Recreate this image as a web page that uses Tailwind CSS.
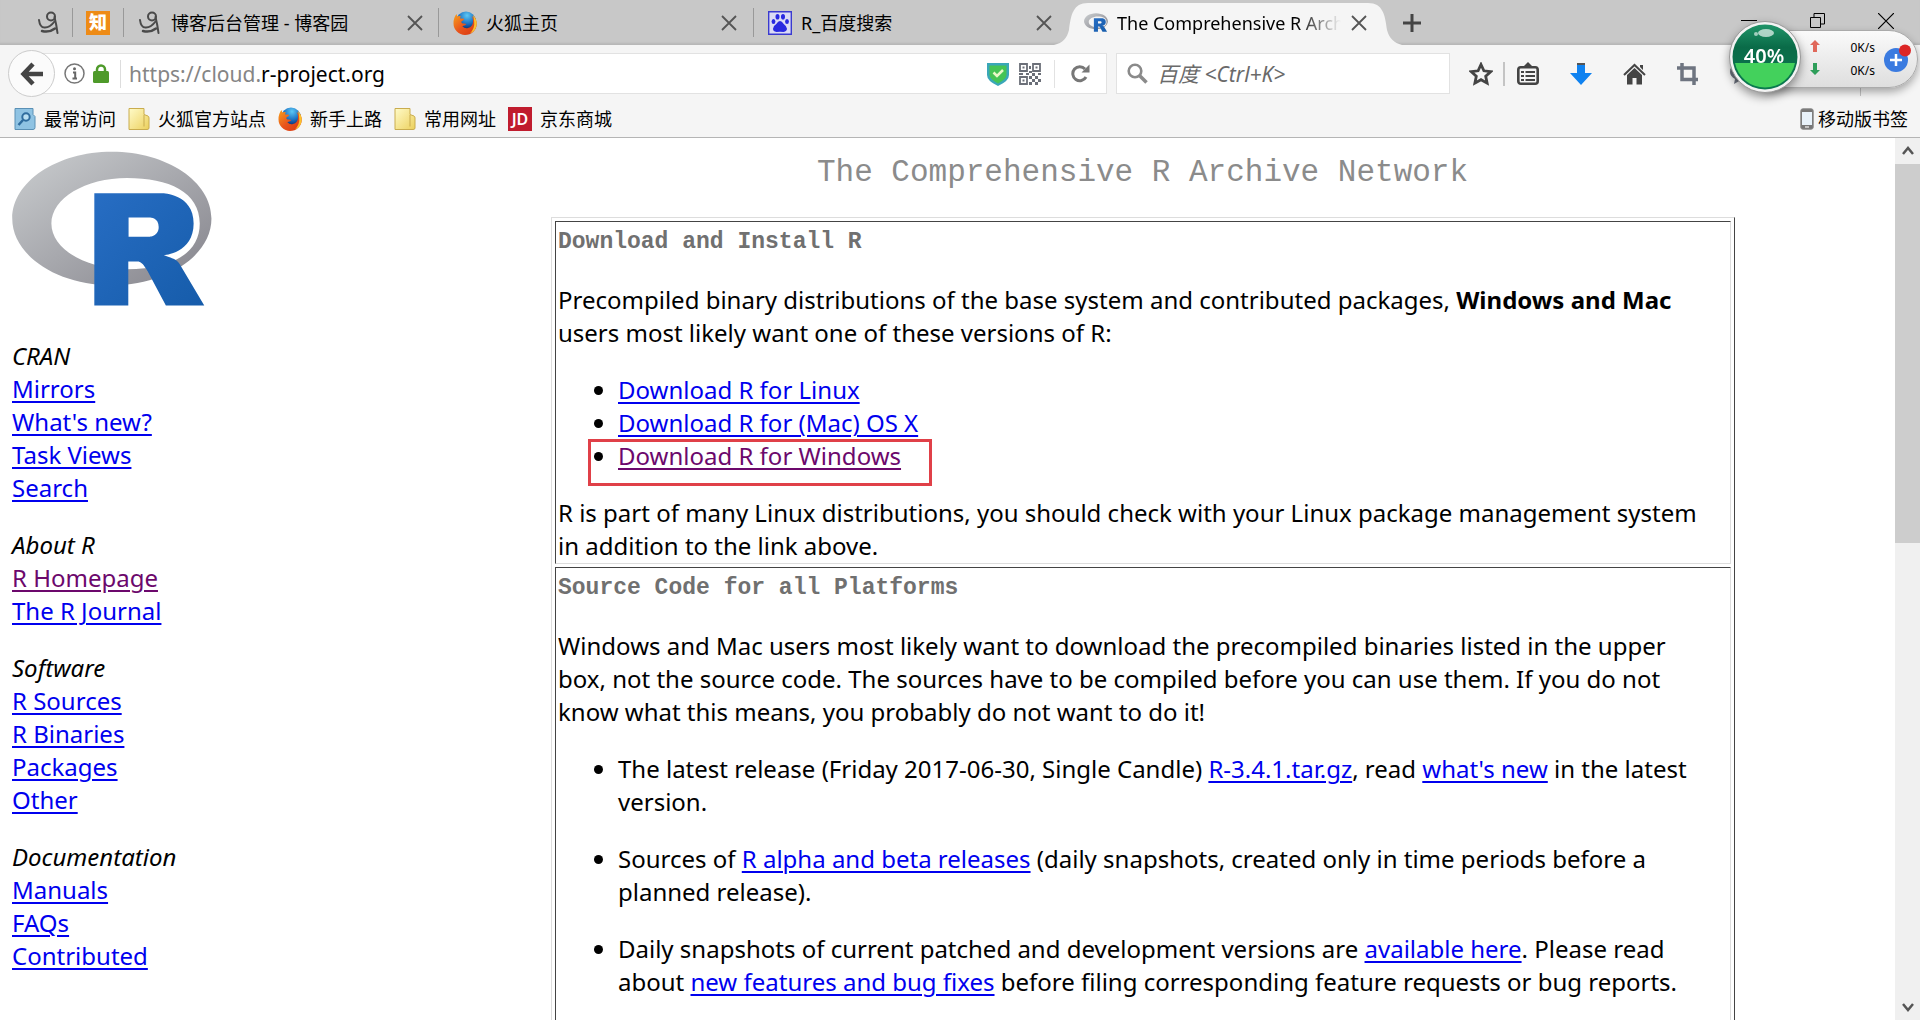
<!DOCTYPE html>
<html lang="zh-CN">
<head>
<meta charset="utf-8">
<title>The Comprehensive R Archive Network</title>
<script src="https://cdn.jsdelivr.net/npm/@tailwindcss/browser@4"></script>
</head>
<body class="h-screen overflow-hidden flex flex-col bg-white text-black font-['Noto_Sans','Noto_Sans_CJK_SC',sans-serif]">

<svg class="absolute size-0" aria-hidden="true">
  <defs>
    <linearGradient id="ring" x1="0" y1="0" x2="1" y2="1"><stop offset="0" stop-color="#cbced0"/><stop offset="1" stop-color="#84838b"/></linearGradient>
    <linearGradient id="letter" x1="0" y1="0" x2="1" y2="1"><stop offset="0" stop-color="#276dc3"/><stop offset="1" stop-color="#165caa"/></linearGradient>
    <radialGradient id="globe" cx=".55" cy=".2" r=".7"><stop offset="0" stop-color="#5cc8f5"/><stop offset=".6" stop-color="#1c6fc0"/><stop offset="1" stop-color="#0b2a6b"/></radialGradient>
    <linearGradient id="fox" x1="0" y1="0" x2="1" y2="1"><stop offset="0" stop-color="#f9a11b"/><stop offset=".5" stop-color="#e8541c"/><stop offset="1" stop-color="#d8350f"/></linearGradient>
    <linearGradient id="folderfill" x1="0" y1="0" x2="1" y2="1"><stop offset="0" stop-color="#fffbc9"/><stop offset="1" stop-color="#ecd05c"/></linearGradient>
    <linearGradient id="ball" x1="0" y1="0" x2="0" y2="1"><stop offset="0" stop-color="#1f9468"/><stop offset=".35" stop-color="#0a6b48"/><stop offset="1" stop-color="#0a7a50"/></linearGradient>
  </defs>
  <symbol id="rlogo" viewBox="0 0 724 561">
    <path fill="url(#ring)" fill-rule="evenodd" d="M361.5 486C162.300 486 .9 377.800 .9 244.500S162.300 3 361.500 3 722 111.100 722 244.500 560.600 486 361.500 486ZM416.600 97.400C265.300 97.400 142.600 171.300 142.600 262.500S265.300 427.600 416.600 427.600 679.700 377 679.700 262.500 568 97.400 416.600 97.400Z"/>
    <path fill="url(#letter)" fill-rule="evenodd" d="M550 377S571.800 383.600 584.500 390C588.900 392.200 596.500 396.700 602 402.500 607.400 408.200 610 414 610 414L696 559H557L492 437S478.700 414.100 470.500 407.500C463.700 402 460.800 400 454 400H421V559H298V153H545S657.500 155 657.500 262 550 377 550 377ZM496.500 241H422V310H496.500S531 309.900 531 274.900C531 239.200 496.500 241 496.500 241Z"/>
  </symbol>
  <symbol id="firefox" viewBox="0 0 24 24">
    <circle cx="13" cy="10.500" r="10" fill="url(#globe)"/>
    <path d="M20 4q3.800 4 3.700 9A11.800 11 0 0 1 12 24 11.600 11.600 0 0 1 .5 12.500Q.3 7 3.500 3l.8 2.500Q6 4.500 8 5.300 6.800 6.500 7.200 7.500q1.200-.3 3.800.3.700.9-1.500 2l-1.300 1q.3 1.500 1.500 1.700 2-.4 3.700.6-1 2-4.200 1.800 2.300 3 5.800 2.200 4.800-1.300 5-6Q20.500 7.500 18.500 5l2.800 2.500Z" fill="url(#fox)"/>
    <path d="M20 4q3.800 4 3.700 9A11.800 11 0 0 1 17 22.500Q22 17 21.200 11 21 7 20 4Z" fill="#fbc22c"/>
  </symbol>
  <symbol id="cnblogs" viewBox="0 0 22 24" >
    <g fill="none" stroke="#4a4a4a" stroke-width="2" stroke-linecap="round">
      <path d="M1 9q1 8 6 7.500 5 0 9.500-6"/><circle cx="13" cy="5.500" r="4"/><path d="M16.500 6q2 8 3 16"/><path d="M4 20q7 2 13-2.500" stroke-width="2.500"/>
    </g>
  </symbol>
  <symbol id="cross" viewBox="0 0 16 16"><path d="M1 1 15 15M15 1 1 15" stroke="#555" stroke-width="1.800"/></symbol>
  <symbol id="folder" viewBox="0 0 22 24"><path d="M1 1.500h15v6l4 1.500q1 .5 1 2v10q0 1.500-2 1.500H1Z" fill="url(#folderfill)" stroke="#c9ac4e"/><path d="M16 8v11.500" stroke="#c9ac4e"/></symbol>
</svg>

<header class="relative shrink-0 bg-[#f5f5f5] border-b border-[#b5b5b5]">
  <!-- tab strip -->
  <div class="h-[45px] flex items-stretch bg-[#c8c8c8] shadow-[inset_0_-3px_2px_-1px_#b8b8b8] text-lg leading-6" role="tablist">
    <button class="w-[72px] shrink-0 flex items-center justify-end pr-3" aria-label="博客园"><svg class="w-[22px] h-6"><use href="#cnblogs"/></svg></button>
    <span class="w-px my-2 bg-[#999]"></span>
    <button class="w-[50px] shrink-0 flex items-center justify-center" aria-label="知乎"><span class="size-6 bg-[#ee8b16] text-white font-black text-lg leading-[22px] text-center">知</span></button>
    <span class="w-px my-2 bg-[#999]"></span>
    <button class="w-[314px] shrink-0 flex items-center pl-[15px] pr-[15px]"><svg class="w-[22px] h-6 mr-[10px]"><use href="#cnblogs"/></svg><span class="flex-1 text-left">博客后台管理 - 博客园</span><svg class="size-4"><use href="#cross"/></svg></button>
    <span class="w-px my-2 bg-[#999]"></span>
    <button class="w-[314px] shrink-0 flex items-center pl-3.5 pr-4"><svg class="size-6 mr-[9px]"><use href="#firefox"/></svg><span class="flex-1 text-left">火狐主页</span><svg class="size-4"><use href="#cross"/></svg></button>
    <span class="w-px my-2 bg-[#999]"></span>
    <button class="w-[314px] shrink-0 flex items-center pl-3.5 pr-4">
      <svg class="size-6 mr-[9px]" viewBox="0 0 24 24"><path d="M.7.7h22.600v22.600H.7Z" fill="#dcdcf5" stroke="#3a3ad0" stroke-width="1.400"/><g fill="#2a2ae0"><ellipse cx="9.500" cy="5.800" rx="2" ry="2.800"/><ellipse cx="15" cy="5.800" rx="2" ry="2.800"/><ellipse cx="5.500" cy="10.500" rx="1.900" ry="2.600"/><ellipse cx="19" cy="10.500" rx="1.900" ry="2.600"/><path d="M12 10q2 0 3.500 2.800 3.500 2.700 3.500 5T15.500 21q-3.500-.7-7 0Q5 20.500 5 17.800t3.500-5Q10 10 12 10Z"/></g></svg>
      <span class="flex-1 text-left">R_百度搜索</span><svg class="size-4"><use href="#cross"/></svg></button>
    <button class="relative w-[322px] shrink-0 flex items-center pl-4 pr-[23px]" aria-selected="true">
      <svg class="absolute -left-[14px] top-0 w-[350px] h-[45px]" viewBox="0 0 350 45"><path d="M0 45C9 43 13 38 15 30 17 15 19 3 34 3H314C329 3 331 15 333 30 335 38 340 43 348 45Z" fill="#f5f5f5"/></svg>
      <svg class="relative w-6 h-[19px] mr-[9px]"><use href="#rlogo"/></svg>
      <span class="relative flex-1 min-w-0 overflow-hidden whitespace-nowrap text-left mask-r-from-80% mask-r-to-100%">The Comprehensive R Archive Network</span>
      <svg class="relative size-4 ml-2.5"><use href="#cross"/></svg></button>
    <button class="ml-2.5 w-6 shrink-0 flex items-center justify-center" aria-label="新标签页"><svg class="size-[18px]" viewBox="0 0 18 18"><path d="M9 0v18M0 9h18" stroke="#444" stroke-width="3"/></svg></button>
    <div class="ml-auto flex items-start gap-[53px] pt-[13px] pr-[26px]">
      <button aria-label="最小化"><svg class="size-4" viewBox="0 0 16 16"><path d="M0 7.500h16" stroke="#000"/></svg></button>
      <button aria-label="还原"><svg class="size-[15px]" viewBox="0 0 15 15"><path d="M.5 4.500h10v10H.5ZM4 4V.5h10.500V11H11" fill="none" stroke="#000"/></svg></button>
      <button aria-label="关闭"><svg class="size-4" viewBox="0 0 16 16"><path d="M0 0 16 16M16 0 0 16" stroke="#000" stroke-width="1.200"/></svg></button>
    </div>
  </div>

  <!-- navigation bar -->
  <div class="h-[57px] flex items-center pl-2 pr-[14px]">
    <button class="relative z-10 size-[47px] shrink-0 rounded-full bg-[#fbfbfb] border border-[#ccc] flex items-center justify-center" aria-label="后退"><svg class="size-6" viewBox="0 0 24 24"><path d="M23 12H4M13 2 3.500 12 13 22" fill="none" stroke="#444" stroke-width="4.500"/></svg></button>
    <div class="-ml-6 h-[41px] flex-1 flex items-center bg-white border border-[#e2e2e2] pl-8">
      <svg class="size-[21px]" viewBox="0 0 21 21"><circle cx="10.500" cy="10.500" r="9.500" fill="none" stroke="#777" stroke-width="1.500"/><path d="M9 9.500h2.200v6M8.500 15.500h4.500" fill="none" stroke="#666" stroke-width="2"/><circle cx="10.500" cy="5.800" r="1.500" fill="#666"/></svg>
      <svg class="ml-2 w-4 h-[19px]" viewBox="0 0 16 19"><path d="M4 9V5.500a4 4 0 0 1 8 0V9" fill="none" stroke="#4e9a2a" stroke-width="2.500"/><rect y="7" width="16" height="12" rx="1.500" fill="#4e9a2a"/></svg>
      <span class="ml-[11px] w-px h-7 bg-[#ddd]"></span>
      <div class="ml-2 flex-1 text-[21px] leading-7" role="textbox" aria-label="地址"><span class="text-[#858585]">https://cloud.</span>r-project.org</div>
      <svg class="w-[22px] h-6" viewBox="0 0 22 24"><path d="M0 1h22v12q0 6-11 11Q0 19 0 13Z" fill="#3aa7b8"/><path d="M2.500 3.500h17V13q0 4-8.500 8.500Q2.500 17 2.500 13Z" fill="#45c455"/><path d="m6.500 10.500 3.500 3.500 6-6" fill="none" stroke="#e9f8c8" stroke-width="2.500"/></svg>
      <svg class="ml-2.5 size-[22px]" viewBox="0 0 22 22"><g fill="none" stroke="#6b6f78" stroke-width="1.800"><path d="M1 1h7v7H1ZM14 1h7v7h-7ZM1 14h7v7H1Z"/></g><path d="M3.500 3.500h2v2h-2ZM16.500 3.500h2v2h-2ZM3.500 16.500h2v2h-2ZM10 3h2v3h-2ZM0 10h4v2H0ZM7 10h3v2H7ZM10 8h3v2h-3ZM13 10h3v3h-3ZM19 10h3v2h-3ZM10 13h3v3h-3ZM16 13h3v3h-3ZM13 16h3v3h-3ZM19 16h3v3h-3ZM10 19h3v3h-3ZM16 19h3v3h-3Z" fill="#6b6f78"/></svg>
      <span class="ml-[13px] w-px h-7 bg-[#e2e2e2]"></span>
      <button class="mx-4 shrink-0" aria-label="刷新"><svg class="size-[19px]" viewBox="0 0 19 19"><path d="M14 5A7 7 0 1 0 15 13" fill="none" stroke="#777" stroke-width="3"/><path d="M18.500.5v8h-8Z" fill="#777"/></svg></button>
    </div>
    <label class="ml-[9px] w-[334px] h-[41px] flex items-center bg-white border border-[#e2e2e2] pl-[10px]">
      <svg class="size-[21px] shrink-0" viewBox="0 0 21 21"><circle cx="8" cy="8" r="6.300" fill="none" stroke="#8a8a8a" stroke-width="2.600"/><path d="m12.500 12.500 7 7" stroke="#8a8a8a" stroke-width="3.500"/></svg>
      <input type="search" aria-label="搜索" placeholder="百度 &lt;Ctrl+K&gt;" class="ml-[9px] min-w-0 flex-1 italic text-[21px] leading-7 outline-none placeholder:text-[#6a6a6a]">
    </label>
    <div class="ml-[19px] w-[437px] shrink-0 flex items-center">
      <button aria-label="收藏"><svg class="size-6" viewBox="0 0 24 24"><path d="m12 2.500 2.900 6.300 6.900.8-5.100 4.700 1.400 6.800L12 17.700l-6.100 3.400 1.400-6.800-5.100-4.700 6.900-.8Z" fill="none" stroke="#444" stroke-width="2.800"/></svg></button>
      <span class="ml-[10px] w-0.5 h-6 bg-[#c4c4c4]"></span>
      <button class="ml-3" aria-label="书签"><svg class="w-[22px] h-6" viewBox="0 0 22 24"><rect x="1.300" y="5.300" width="19.400" height="16.400" rx="2.500" fill="none" stroke="#444" stroke-width="2.600"/><path d="M5 6 11 0l6 6Z" fill="#444"/><path d="M4 10h3M4 14h3M4 18h3M8.500 10H18M8.500 14H18M8.500 18H18" stroke="#444" stroke-width="2"/></svg></button>
      <button class="ml-[31px]" aria-label="下载"><svg class="size-[22px]" viewBox="0 0 22 22"><path d="M7 1h8v9h7L11 22 0 10h7Z" fill="#0f82f0"/><path d="M7 0h8v2H7Z" fill="#555"/></svg></button>
      <button class="ml-[31px]" aria-label="主页"><svg class="w-[23px] h-[22px]" viewBox="0 0 23 22"><path d="M1 12 11.500 2 22 12" fill="none" stroke="#444" stroke-width="2"/><path d="M17 2h3v5l-3-3ZM4 12l7.500-7L19 12v9.500h-5.500V15h-4v6.500H4Z" fill="#444"/></svg></button>
      <button class="ml-[31px]" aria-label="截图"><svg class="size-[22px]" viewBox="0 0 22 22"><path d="M0 5h17v12M5 0v16.500h16M17 17v5" fill="none" stroke="#6e7480" stroke-width="3.500"/></svg></button>
      <button class="ml-[31px]" aria-label="反馈"><svg class="size-[22px]" viewBox="0 0 22 22"><path d="M11 1c6 0 11 3 11 8s-5 8-11 8l-7 4 1-5Q0 13 0 9 0 1 11 1Z" fill="#6e7480"/></svg></button>
      <span class="ml-[108px] w-px h-11 bg-[#c4c4c4]"></span>
    </div>
  </div>

  <!-- bookmarks -->
  <nav class="h-[35px] flex items-center pl-3.5 pr-3 pb-0.5 text-lg leading-6" aria-label="书签栏">
    <a href="#" class="flex items-center gap-2"><svg class="w-[22px] h-6" viewBox="0 0 22 24"><path d="M1 1.500h18v6l2 2v11q0 2-2 2H1Z" fill="#8fc3e3" stroke="#5a90b5"/><circle cx="12" cy="10" r="3.700" fill="#b9dff2" stroke="#2f6c9e" stroke-width="2"/><path d="m9 13-4.500 5" stroke="#2f6c9e" stroke-width="2.500"/></svg>最常访问</a>
    <a href="#" class="ml-3 flex items-center gap-2"><svg class="w-[22px] h-6"><use href="#folder"/></svg>火狐官方站点</a>
    <a href="#" class="ml-3 flex items-center gap-2"><svg class="size-6"><use href="#firefox"/></svg>新手上路</a>
    <a href="#" class="ml-3 flex items-center gap-2"><svg class="w-[22px] h-6"><use href="#folder"/></svg>常用网址</a>
    <a href="#" class="ml-3 flex items-center gap-2"><span class="size-6 bg-[#c01c2e] text-white text-base font-semibold leading-6 text-center">JD</span>京东商城</a>
    <a href="#" class="ml-auto flex items-center gap-1"><svg class="w-3.5 h-[22px]" viewBox="0 0 14 22"><rect x=".8" y=".8" width="12.400" height="20.400" rx="2" fill="#777" stroke="#8a8a8a"/><path d="M2 4h10v13H2Z" fill="#e8f2fa"/><path d="M5 19h4" stroke="#ddd" stroke-width="1.500"/></svg>移动版书签</a>
  </nav>

  <!-- floating speed monitor -->
  <div class="absolute z-20 right-0.5 top-5 h-[74px] w-[190px] flex items-center font-['Noto_Sans',sans-serif]">
    <div class="absolute left-9 right-0 top-[10px] h-[58px] rounded-r-full border border-[#aaa] bg-linear-to-b from-[#fafafa] to-[#dedede] shadow-[0_4px_8px_#0005]"></div>
    <svg class="relative size-[74px] shrink-0 drop-shadow-[0_4px_5px_#0006]" viewBox="0 0 74 74"><circle cx="37" cy="37" r="35.500" fill="#f3f3f3" stroke="#999"/><circle cx="37" cy="37" r="32.500" fill="url(#ball)"/><path d="M7 43H67A30.600 30.600 0 0 1 7 43Z" fill="#43d15c"/><ellipse cx="38" cy="13" rx="8" ry="4" fill="#fff" opacity=".65"/><circle cx="28" cy="14" r="2" fill="#fff" opacity=".6"/><text x="36" y="43" text-anchor="middle" fill="#fff" font-family="Noto Sans" font-weight="600" font-size="20">40%</text></svg>
    <div class="relative ml-2 flex flex-col gap-[11px]"><svg class="w-2.5 h-3" viewBox="0 0 10 12"><path d="M5 0 10 5H7v7H3V5H0Z" fill="#e0685a"/></svg><svg class="w-2.5 h-3" viewBox="0 0 10 12"><path d="M5 12 10 7H7V0H3v7H0Z" fill="#2e9e5a"/></svg></div>
    <div class="relative flex-1 text-right text-xs leading-[23px] pr-2 pt-1"><div>0K/s</div><div>0K/s</div></div>
    <svg class="relative w-[30px] h-8 mr-[5px]" viewBox="0 0 30 32"><circle cx="13" cy="19" r="12" fill="#3b7be0"/><path d="M13 13v12M7 19h12" stroke="#fff" stroke-width="2.500"/><circle cx="22" cy="9.500" r="6" fill="#dc2626"/></svg>
  </div>
</header>

<div class="flex-1 min-h-0 flex text-2xl leading-[33px]">
  <aside class="w-[390px] shrink-0 overflow-hidden pl-3 pt-[13px]">
    <svg class="w-[200px] h-[155px]" role="img" aria-label="R"><use href="#rlogo"/></svg>
    <nav class="mt-[33px] flex flex-col gap-6 [&_a]:underline [&_a]:underline-offset-3 [&_a]:decoration-2 [&_a]:text-[#0000ee] [&_li]:h-[33px]">
      <div><em>CRAN</em><ul><li><a href="#">Mirrors</a></li><li><a href="#">What's new?</a></li><li><a href="#">Task Views</a></li><li><a href="#">Search</a></li></ul></div>
      <div><em>About R</em><ul><li><a href="#" class="text-[#6c086c]!">R Homepage</a></li><li><a href="#">The R Journal</a></li></ul></div>
      <div><em>Software</em><ul><li><a href="#">R Sources</a></li><li><a href="#">R Binaries</a></li><li><a href="#">Packages</a></li><li><a href="#">Other</a></li></ul></div>
      <div><em>Documentation</em><ul><li><a href="#">Manuals</a></li><li><a href="#">FAQs</a></li><li><a href="#">Contributed</a></li></ul></div>
    </nav>
  </aside>

  <main class="flex-1 min-w-0 overflow-hidden pt-3">
    <h1 class="text-center font-['Liberation_Mono',monospace] text-[31px] leading-[46px] text-[#8b8b8b]">The Comprehensive R Archive Network</h1>
    <div class="mt-[21px] ml-[161px] mr-40 p-[3px] flex flex-col gap-[3px] border border-l-[#ddd] border-t-[#ddd] border-r-[#444] border-b-[#444] [&_a]:underline [&_a]:underline-offset-3 [&_a]:decoration-2 [&_a]:text-[#0000ee]">
      <section class="px-0.5 py-px border border-l-[#444] border-t-[#444] border-r-[#ddd] border-b-[#ddd]">
        <h2 class="font-['Liberation_Mono',monospace] text-[23px] leading-[38px] font-bold text-[#707070]">Download and Install R</h2>
        <p class="mt-[22px] whitespace-nowrap">Precompiled binary distributions of the base system and contributed packages, <strong>Windows and Mac</strong><br>users most likely want one of these versions of R:</p>
        <ul class="my-6 pl-[60px] list-disc">
          <li><a href="#">Download R for Linux</a></li>
          <li><a href="#">Download R for (Mac) OS X</a></li>
          <li class="relative"><a href="#" class="text-[#6c086c]!">Download R for Windows</a><span class="absolute -left-[30px] top-0 w-[344px] h-[47px] border-3 border-[#e04048]"></span></li>
        </ul>
        <p class="whitespace-nowrap">R is part of many Linux distributions, you should check with your Linux package management system<br>in addition to the link above.</p>
      </section>
      <section class="px-0.5 pt-px pb-20 border border-l-[#444] border-t-[#444] border-r-[#ddd] border-b-[#ddd]">
        <h2 class="font-['Liberation_Mono',monospace] text-[23px] leading-[38px] font-bold text-[#707070]">Source Code for all Platforms</h2>
        <p class="mt-[22px] whitespace-nowrap">Windows and Mac users most likely want to download the precompiled binaries listed in the upper<br>box, not the source code. The sources have to be compiled before you can use them. If you do not<br>know what this means, you probably do not want to do it!</p>
        <ul class="mt-6 pl-[60px] list-disc flex flex-col gap-6 whitespace-nowrap">
          <li>The latest release (Friday 2017-06-30, Single Candle) <a href="#">R-3.4.1.tar.gz</a>, read <a href="#">what's new</a> in the latest<br>version.</li>
          <li>Sources of <a href="#">R alpha and beta releases</a> (daily snapshots, created only in time periods before a<br>planned release).</li>
          <li>Daily snapshots of current patched and development versions are <a href="#">available here</a>. Please read<br>about <a href="#">new features and bug fixes</a> before filing corresponding feature requests or bug reports.</li>
        </ul>
      </section>
    </div>
  </main>

  <!-- scrollbar -->
  <div class="w-[25px] shrink-0 flex flex-col items-stretch bg-[#f0f0f0]">
    <button class="h-[26px] flex items-center justify-center" aria-label="向上滚动"><svg class="w-3 h-2.5" viewBox="0 0 12 10"><path d="m1 8 5-6 5 6" fill="none" stroke="#555" stroke-width="2.500"/></svg></button>
    <div class="h-[43%] bg-[#cdcdcd]"></div>
    <button class="mt-auto h-[26px] flex items-center justify-center" aria-label="向下滚动"><svg class="w-3 h-2.5" viewBox="0 0 12 10"><path d="m1 2 5 6 5-6" fill="none" stroke="#555" stroke-width="2.500"/></svg></button>
  </div>
</div>
</body>
</html>
